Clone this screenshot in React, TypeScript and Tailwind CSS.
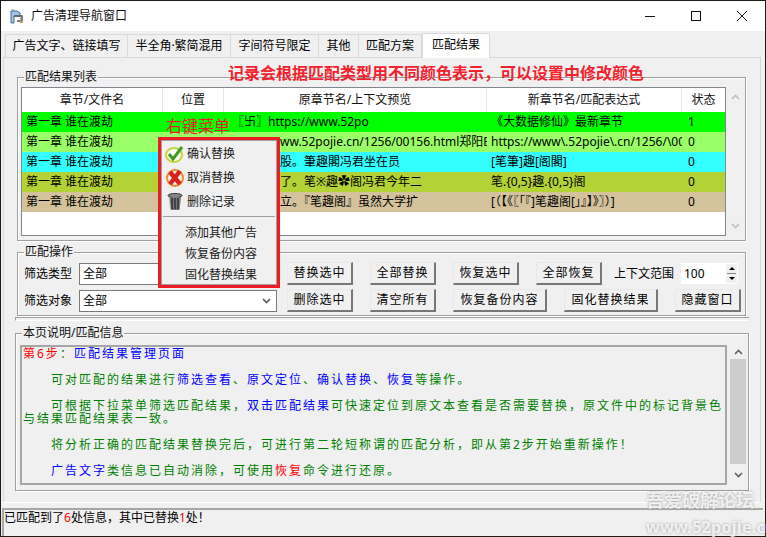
import React from "react";

const rows = [
  { bg: "bg-[#00ff00]", pre: "〖卐〗https://www.52po", pad: "pl-[8px]", next: "《大数据修仙》最新章节", state: "1" },
  { bg: "bg-[#99ff66]", pre: "ww.52pojie.cn/1256/00156.html郑阳E", pad: "pl-[56px]", next: "https://www\\.52pojie\\.cn/1256/\\00156", state: "0" },
  { bg: "bg-[#33ffff]", pre: "股。筆趣閣冯君坐在员", pad: "pl-[56px]", next: "[笔筆]趣[阁閣]", state: "0" },
  { bg: "bg-[#b2d235]", pre: "了。笔※趣✿阁冯君今年二", pad: "pl-[56px]", next: "笔.{0,5}趣.{0,5}阁", state: "0" },
  { bg: "bg-[#d3c29c]", pre: "立。『笔趣阁』虽然大学扩", pad: "pl-[56px]", next: "[（【《〖「『]笔趣阁[」』】》〗）]", state: "0" },
];

function Chevron({ up, color }: { up?: boolean; color: string }) {
  return (
    <svg width="9" height="6" viewBox="0 0 9 6" fill="none" stroke={color} strokeWidth="1.6">
      <path d={up ? "M1 5L4.5 1.5L8 5" : "M1 1L4.5 4.5L8 1"} />
    </svg>
  );
}

function Btn({ w, children }: { w: string; children: React.ReactNode }) {
  return (
    <button className={`${w} h-[23px] shrink-0 bg-[#f0f0f0] border-t border-l border-t-[#e8e8e8] border-l-[#e8e8e8] border-r-2 border-b-2 border-r-[#777777] border-b-[#777777] text-[12px] leading-[18px] tracking-[1px] text-black`}>
      {children}
    </button>
  );
}

function Legend({ children }: { children: React.ReactNode }) {
  return (
    <div className="-mt-[8px] ml-[6px] w-fit h-[14px] px-px bg-[#f0f0f0] text-[12px] leading-[14px] text-[#111111]">
      {children}
    </div>
  );
}

function Combo({ arrow }: { arrow?: boolean }) {
  return (
    <div className="w-[198px] h-[22px] shrink-0 flex items-center justify-between bg-white border border-[#7a7a7a] pl-[3px] pr-[5px] text-[12px]">
      <span>全部</span>
      {arrow && <Chevron color="#555555" />}
    </div>
  );
}

export default function App() {
  return (
    <div className="relative w-[766px] h-[537px] overflow-hidden bg-[#1e1b16] p-px font-['Noto_Sans','Noto_Sans_CJK_SC',sans-serif] text-black">
      <div className="w-[764px] h-[535px] flex flex-col bg-[#f0f0f0]">
        {/* Title bar */}
        <div className="h-[30px] shrink-0 bg-white flex items-center">
          <svg className="ml-[8px]" width="16" height="16" viewBox="0 0 16 16" fill="none">
            <path d="M2 3h6l3 2v3H5v7H2z" fill="#9fc5e8" stroke="#4a6a8a" strokeWidth="1" />
            <path d="M5 8h8v5H8" stroke="#555555" strokeWidth="1.5" />
            <path d="M11 10l3 3M4 1v2" stroke="#888888" strokeWidth="1.2" />
            <rect x="11" y="13" width="3" height="2" fill="#c8a060" />
          </svg>
          <span className="ml-[6px] text-[12px] text-[#111111]">广告清理导航窗口</span>
          <div className="ml-auto flex items-center">
            <svg width="46" height="30" viewBox="0 0 46 30" stroke="#111111" strokeWidth="1"><path d="M18 15.5h10" /></svg>
            <svg width="46" height="30" viewBox="0 0 46 30" fill="none" stroke="#111111" strokeWidth="1"><rect x="18.5" y="10.5" width="9" height="9" /></svg>
            <svg width="46" height="30" viewBox="0 0 46 30" stroke="#111111" strokeWidth="1"><path d="M18 10l10 10M28 10L18 20" /></svg>
          </div>
        </div>

        {/* Tabs */}
        <div className="h-[26px] shrink-0 flex items-end pl-[4px] relative z-10 text-[12px]">
          <div className="w-[123px] h-[23px] flex items-center justify-center border border-b-0 border-[#d9d9d9] bg-[#f0f0f0]">广告文字、链接填写</div>
          <div className="w-[103px] h-[23px] flex items-center justify-center border-y border-r border-b-0 border-[#d9d9d9] bg-[#f0f0f0]">半全角·繁简混用</div>
          <div className="w-[88px] h-[23px] flex items-center justify-center border-y border-r border-b-0 border-[#d9d9d9] bg-[#f0f0f0]">字间符号限定</div>
          <div className="w-[40px] h-[23px] flex items-center justify-center border-y border-r border-b-0 border-[#d9d9d9] bg-[#f0f0f0]">其他</div>
          <div className="w-[63px] h-[23px] flex items-center justify-center border-y border-r border-b-0 border-[#d9d9d9] bg-[#f0f0f0]">匹配方案</div>
          <div className="w-[68px] h-[25px] -mb-px pb-[3px] flex items-center justify-center border border-b-0 border-[#d9d9d9] bg-white">匹配结果</div>
        </div>

        {/* Tab pane */}
        <div className="ml-[2px] w-[758px] h-[446px] shrink-0 border-t border-x border-[#d9d9d9] border-b border-b-white flex flex-col">
          {/* Group 1 */}
          <div className="mt-[19px] ml-[13px] w-[729px] h-[164px] shrink-0 border border-[#a0a0a0] shadow-[inset_1px_1px_0_#ffffff,1px_1px_0_#ffffff]">
            <Legend>匹配结果列表</Legend>
            <div className="flex">
              <div className="mt-[3px] ml-[3px] w-[705px] h-[149px] shrink-0 border border-[#82878f] bg-white text-[12px]">
                <div className="h-[24px] flex items-center text-center text-[#111111]">
                  <div className="w-[141px] border-r border-[#e5e5e5] leading-[24px]">章节/文件名</div>
                  <div className="w-[61px] border-r border-[#e5e5e5] leading-[24px]">位置</div>
                  <div className="w-[263px] border-r border-[#e5e5e5] leading-[24px]">原章节名/上下文预览</div>
                  <div className="w-[195px] border-r border-[#e5e5e5] leading-[24px]">新章节名/匹配表达式</div>
                  <div className="w-[43px] leading-[24px]">状态</div>
                </div>
                {rows.map((r, i) => (
                  <div key={i} className={`h-[20px] flex items-center whitespace-nowrap ${r.bg}`}>
                    <div className="w-[141px] pl-[4px] overflow-hidden">第一章 谁在渡劫</div>
                    <div className="w-[61px]" />
                    <div className={`w-[263px] overflow-hidden ${r.pad}`}>{r.pre}</div>
                    <div className="w-[195px] pl-[4px] overflow-hidden">{r.next}</div>
                    <div className="w-[43px] pl-[6px]">{r.state}</div>
                  </div>
                ))}
              </div>
              <div className="mt-[3px] ml-px w-[17px] h-[149px] shrink-0 flex flex-col items-center justify-between py-[7px] bg-[#f0f0f0]">
                <Chevron up color="#c0c0c0" />
                <Chevron color="#c0c0c0" />
              </div>
            </div>
          </div>

          {/* Group 2 */}
          <div className="mt-[11px] ml-[13px] w-[729px] h-[64px] shrink-0 border border-[#a0a0a0] shadow-[inset_1px_1px_0_#ffffff,1px_1px_0_#ffffff]">
            <Legend>匹配操作</Legend>
            <div className="mt-[3px] pl-[6px] flex flex-col gap-[4px] text-[12px]">
              <div className="flex items-center">
                <span className="w-[55px] shrink-0">筛选类型</span>
                <Combo />
                <div className="ml-[10px] flex gap-[17px]">
                  <Btn w="w-[66px]">替换选中</Btn>
                  <Btn w="w-[66px]">全部替换</Btn>
                  <Btn w="w-[66px]">恢复选中</Btn>
                  <Btn w="w-[66px]">全部恢复</Btn>
                </div>
                <span className="ml-[12px] w-[60px] shrink-0 whitespace-nowrap">上下文范围</span>
                <div className="ml-[7px] w-[57px] h-[21px] flex items-center justify-between bg-white pl-[3px] pr-px">
                  <span>100</span>
                  <div className="w-[11px] h-[19px] flex flex-col items-center justify-center gap-[3px] bg-[#f0f0f0]">
                    <div className="border-x-[3px] border-x-transparent border-b-[3px] border-b-black" />
                    <div className="w-[9px] h-px bg-[#888888]" />
                    <div className="border-x-[3px] border-x-transparent border-t-[3px] border-t-black" />
                  </div>
                </div>
              </div>
              <div className="flex items-center">
                <span className="w-[55px] shrink-0">筛选对象</span>
                <Combo arrow />
                <div className="ml-[10px] flex gap-[17px]">
                  <Btn w="w-[66px]">删除选中</Btn>
                  <Btn w="w-[66px]">清空所有</Btn>
                  <Btn w="w-[94px]">恢复备份内容</Btn>
                  <Btn w="w-[94px]">固化替换结果</Btn>
                  <Btn w="w-[66px]">隐藏窗口</Btn>
                </div>
              </div>
            </div>
          </div>

          {/* Splitter */}
          <div className="mt-px ml-[11px] w-[734px] h-[4px] shrink-0 border-t border-l border-[#a0a0a0] border-b border-b-white" />

          {/* Group 3 */}
          <div className="mt-[12px] ml-[11px] w-[734px] h-[158px] shrink-0 border border-[#a0a0a0] shadow-[inset_1px_1px_0_#ffffff,1px_1px_0_#ffffff]">
            <Legend>本页说明/匹配信息</Legend>
            <div className="flex mt-[-1px]">
              <div className="mt-[6px] ml-[4px] w-[707px] h-[140px] shrink-0 border-2 border-[#a6a6a6] bg-[#f0f0f0] pl-[1px] pt-0 text-[12px] leading-[13px] tracking-[2px] text-[#008000] whitespace-pre-wrap">
                <span className="text-[#ff0000]">第6步</span>：<span className="text-[#0000ff]">匹配结果管理页面</span>
                {"\n\n"}　　可对匹配的结果进行<span className="text-[#0000ff]">筛选查看</span>、<span className="text-[#0000ff]">原文定位</span>、<span className="text-[#0000ff]">确认替换</span>、<span className="text-[#0000ff]">恢复</span>等操作。
                {"\n\n"}　　可根据下拉菜单筛选匹配结果，<span className="text-[#0000ff]">双击匹配结果</span>可快速定位到原文本查看是否需要替换，原文件中的标记背景色与结果匹配结果表一致。
                {"\n\n"}　　将分析正确的匹配结果替换完后，可进行第二轮短称谓的匹配分析，即从第2步开始重新操作！
                {"\n\n"}　　<span className="text-[#0000ff]">广告文字</span>类信息已自动消除，可使用<span className="text-[#ff0000]">恢复</span>命令进行还原。
              </div>
              <div className="mt-[5px] ml-[3px] w-[16px] h-[142px] shrink-0 flex flex-col items-center bg-[#f0f0f0]">
                <div className="h-[15px] flex items-center"><Chevron up color="#606060" /></div>
                <div className="w-full h-[105px] bg-[#cdcdcd]" />
                <div className="h-[22px] flex items-center"><Chevron color="#606060" /></div>
              </div>
            </div>
          </div>
        </div>

        {/* Status */}
        <div className="mt-[5px] ml-px w-[761px] h-[28px] shrink-0 border-t-2 border-l-2 border-[#a6a6a6] text-[12px] leading-[16px] whitespace-nowrap">
          已匹配到了<span className="text-[#ff0000]">6</span>处信息，其中已替换<span className="text-[#ff0000]">1</span>处！
        </div>
      </div>

      {/* Annotation over the window */}
      <div className="absolute left-[228px] top-[64px] text-[16px] leading-[18px] font-bold text-[#f5222d] whitespace-nowrap">
        记录会根据匹配类型用不同颜色表示，可以设置中修改颜色
      </div>
      <div className="absolute left-[166px] top-[117px] text-[16px] leading-[18px] text-[#ee1c25] whitespace-nowrap">右键菜单</div>

      {/* Context menu */}
      <div className="absolute left-[158px] top-[137px] w-[122px] h-[151px] border-[3px] border-[#ed1c24] bg-[#f0f0f0] shadow-[inset_0_0_0_1px_#a0a0a0] text-[12px] text-[#1a1a1a] flex flex-col">
        <div className="h-[24px] mt-[2px] flex items-center pl-[4px]">
          <svg width="20" height="20" viewBox="0 0 20 20" fill="none">
            <ellipse cx="9" cy="11" rx="8" ry="7" fill="#ffffff" stroke="#c6d63a" strokeWidth="2" />
            <path d="M4 10l4 5 9-12" stroke="#3d9a1f" strokeWidth="3" />
          </svg>
          <span className="ml-[2px]">确认替换</span>
        </div>
        <div className="h-[24px] flex items-center pl-[4px]">
          <svg width="20" height="20" viewBox="0 0 20 20" fill="none">
            <circle cx="10" cy="10" r="8" stroke="#f08a30" strokeWidth="2" />
            <path d="M5 4l10 12M15 3L5 16" stroke="#d8231f" strokeWidth="4.5" />
          </svg>
          <span className="ml-[2px]">取消替换</span>
        </div>
        <div className="h-[24px] flex items-center pl-[4px]">
          <svg width="20" height="20" viewBox="0 0 20 20" fill="none">
            <ellipse cx="10" cy="3.5" rx="7" ry="2" fill="#8a8a8a" stroke="#333333" />
            <path d="M4 5l1.5 13h9L16 5z" fill="#777777" />
            <path d="M7 6v11M10 6v11M13 6v11" stroke="#222222" strokeWidth="1.2" />
            <path d="M4 5l1.5 13" stroke="#cccccc" />
          </svg>
          <span className="ml-[2px]">删除记录</span>
        </div>
        <div className="mt-[3px] mx-[2px] h-px bg-[#a0a0a0] shrink-0" />
        <div className="mt-[5px] h-[21px] flex items-center pl-[24px]">添加其他广告</div>
        <div className="h-[21px] flex items-center pl-[24px]">恢复备份内容</div>
        <div className="h-[21px] flex items-center pl-[24px]">固化替换结果</div>
      </div>

      {/* Watermark */}
      <div className="absolute left-[646px] top-[489px] w-[114px] text-white/80 font-bold [text-shadow:0_0_3px_#999999] pointer-events-none">
        <div className="text-[18px] leading-[22px] whitespace-nowrap">吾爱破解论坛</div>
        <div className="mt-[6px] text-[16px] leading-[20px] tracking-[0.3px] whitespace-nowrap">www.52pojie.cn</div>
      </div>
    </div>
  );
}
